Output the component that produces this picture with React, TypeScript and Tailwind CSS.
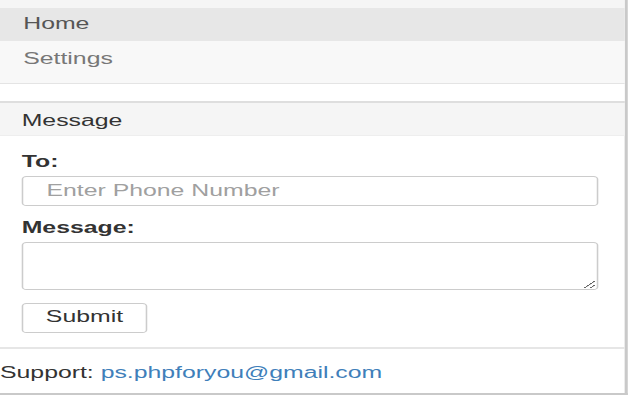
export default function App(): JSX.Element {
  return (
    <div className="h-[400px] w-[640px] overflow-hidden bg-white">
      {/* the popup is drawn at its natural width and stretched sideways like the capture */}
      <div className="w-[413px] origin-top-left scale-x-[1.55] font-['Liberation_Sans',Arial,sans-serif] text-[16px] leading-5">
        <div className="w-[405px] border-r-2 border-b-2 border-[#c9c9c9] bg-white">
          <nav className="bg-[#f5f5f5] pt-2">
            <div className="h-[33px] bg-[#e7e7e7] pl-[15px] pt-[6px] text-[#555]">
              Home
            </div>
            <div className="h-[43px] border-b border-[#e4e4e4] bg-[#f8f8f8] pl-[15px] pt-[8px] text-[#777]">
              Settings
            </div>
          </nav>
          <div className="h-[17px] bg-white" />
          <section className="border-t-2 border-[#dedede]">
            <div className="h-[33px] border-b border-[#eeeeee] bg-[#f5f5f5] pl-[14px] pt-[8px] text-[#333]">
              Message
            </div>
            <form className="flex flex-col px-[14px] pt-[16px] pb-[14px]">
              <label className="font-bold text-[#333]">To:</label>
              <input
                type="text"
                placeholder="Enter Phone Number"
                className="mt-[4px] h-[30px] w-[372px] rounded-[3px] border border-[#cccccc] bg-white px-[15px] text-[16px] text-[#555] outline-none placeholder:text-[#a0a0a0]"
              />
              <label className="mt-[12px] font-bold text-[#333]">Message:</label>
              <textarea className="mt-[4px] h-[48px] w-[372px] rounded-[3px] border border-[#cccccc] bg-white px-2 text-[16px] outline-none" />
              <button
                type="button"
                className="mt-[13px] h-[30px] w-[81px] rounded-[3px] border border-[#cccccc] bg-white pb-[2px] text-[16px] text-[#333]"
              >
                Submit
              </button>
            </form>
          </section>
          <footer className="border-t-2 border-[#e6e6e6] pt-[14px] pb-[10px] text-[#333]">
            Support:{" "}
            <a className="text-[#3f7fba]" href="mailto:ps.phpforyou@gmail.com">
              ps.phpforyou@gmail.com
            </a>
          </footer>
        </div>
      </div>
    </div>
  );
}
